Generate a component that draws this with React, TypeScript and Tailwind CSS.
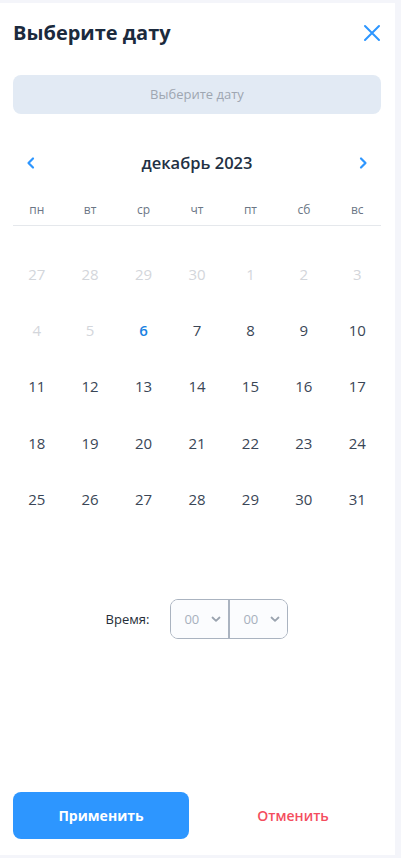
import React from 'react';

const weekDays = ['пн', 'вт', 'ср', 'чт', 'пт', 'сб', 'вс'];

type Day = { n: number; muted?: boolean; today?: boolean };

const days: Day[] = [
  ...[27, 28, 29, 30, 1, 2, 3].map((n) => ({ n, muted: true })),
  { n: 4, muted: true },
  { n: 5, muted: true },
  { n: 6, today: true },
  ...Array.from({ length: 25 }, (_, i) => ({ n: i + 7 })),
];

function Chevron({ dir }: { dir: 'left' | 'right' }) {
  return (
    <svg width="14" height="14" viewBox="0 0 14 14" fill="none">
      <path
        d={dir === 'left' ? 'M9 2.5 4.5 7 9 11.5' : 'M5 2.5 9.5 7 5 11.5'}
        stroke="#2d96ff"
        strokeWidth="2.2"
        strokeLinecap="round"
        strokeLinejoin="round"
      />
    </svg>
  );
}

function SelectBox() {
  return (
    <div className="flex h-[38px] w-[57px] items-center justify-between bg-[#fbfcfe] pl-[13px] pr-[7px]">
      <span className="text-[13px] text-[#a7b0bd]">00</span>
      <svg width="10" height="8" viewBox="0 0 10 8" fill="none">
        <path d="M1.5 2.5 5 5.8 8.5 2.5" stroke="#9aa3af" strokeWidth="1.8" strokeLinecap="round" strokeLinejoin="round" />
      </svg>
    </div>
  );
}

export default function App() {
  return (
    <div className="min-h-[858px] bg-[#f4f5fa] pt-[3px] pr-[5px] pb-[3px]" style={{ fontFamily: '"Open Sans", "Noto Sans", sans-serif' }}>
      <div className="flex h-[852px] w-[395px] flex-col bg-white pl-[13px] pr-[14px]">
        <div className="mt-[16px] flex h-[28px] items-center justify-between">
          <h1 className="text-[20px] font-bold leading-[28px] text-[#1b2a3d]">Выберите дату</h1>
          <svg width="18" height="18" viewBox="0 0 18 18" fill="none">
            <path d="M2 2 16 16M16 2 2 16" stroke="#2d96ff" strokeWidth="2" strokeLinecap="round" />
          </svg>
        </div>

        <div className="mt-[28px] flex h-[39px] items-center justify-center rounded-[8px] bg-[#e2eaf4] text-[13px] text-[#9ea6b1]">
          Выберите дату
        </div>

        <div className="mt-[37px] flex h-[24px] items-center justify-between px-[11px]">
          <Chevron dir="left" />
          <span className="text-[16.5px] font-semibold text-[#223043]">декабрь 2023</span>
          <Chevron dir="right" />
        </div>

        <div className="mt-[25px] grid grid-cols-7 -mx-[3px]">
          {weekDays.map((d) => (
            <div key={d} className="text-center text-[12px] leading-[20px] text-[#6b7685]">
              {d}
            </div>
          ))}
        </div>
        <div className="mt-[5px] h-px bg-[#e5e8ec]" />

        <div className="mt-[20px] grid grid-cols-7 -mx-[3px]">
          {days.map((d, i) => (
            <div
              key={i}
              className={`flex h-[56.3px] items-center justify-center text-[15px] ${
                d.muted ? 'text-[#d3d6db]' : d.today ? 'font-semibold text-[#1a82e2]' : 'text-[#3a4656]'
              }`}
            >
              {d.n}
            </div>
          ))}
        </div>

        <div className="mt-[72px] flex items-center justify-center">
          <span className="mr-[21px] text-[13px] text-[#252d38]">Время:</span>
          <div className="flex overflow-hidden rounded-[8px] border border-[#aab3c0]">
            <SelectBox />
            <div className="w-[2px] bg-[#aab3c0]" />
            <SelectBox />
          </div>
        </div>

        <div className="mt-auto mb-[16px] flex items-center">
          <button className="h-[47px] w-[176px] rounded-[8px] bg-[#2d96ff] text-[14px] font-bold text-white">
            Применить
          </button>
          <button className="flex-1 pl-[16px] text-[14px] font-semibold text-[#f44d5e]">Отменить</button>
        </div>
      </div>
    </div>
  );
}
